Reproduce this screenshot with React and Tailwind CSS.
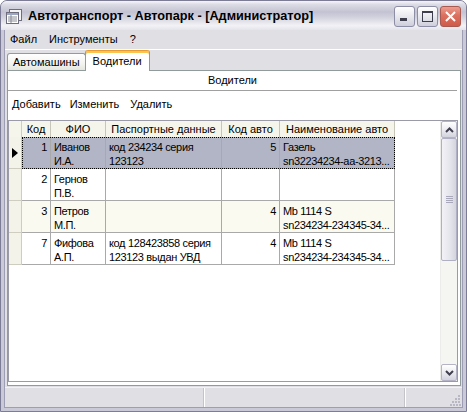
import clsx from 'clsx';

const rows = [
  { id: '1', fio: ['Иванов', 'И.А.'], pass: ['код 234234 серия', '123123'], auto: '5', name: ['Газель', 'sn32234234-aa-3213...'], selected: true },
  { id: '2', fio: ['Гернов', 'П.В.'], pass: [], auto: '', name: [] },
  { id: '3', fio: ['Петров', 'М.П.'], pass: [], auto: '4', name: ['Mb 1114 S', 'sn234234-234345-34...'], alt: true },
  { id: '7', fio: ['Фифова', 'А.П.'], pass: ['код 128423858 серия', '123123 выдан УВД'], auto: '4', name: ['Mb 1114 S', 'sn234234-234345-34...'] },
];

function AppIcon() {
  return (
    <svg width="16" height="15" viewBox="0 0 16 15" className="shrink-0">
      <rect x="3.5" y="0.5" width="12" height="11" fill="#f4f4f4" stroke="#6d6d7d" />
      <rect x="0.5" y="3.5" width="12" height="11" fill="#ffffff" stroke="#6d6d7d" />
      <rect x="1" y="4" width="11" height="2" fill="#9aa6c2" />
      <path d="M2 8h9M2 10h9M2 12h9M5 6v8" stroke="#8a8a98" strokeWidth="1" />
    </svg>
  );
}

function TitleButton({ kind }) {
  const close = kind === 'close';
  return (
    <div
      className={clsx(
        'w-[21px] h-[21px] rounded-[3px] border flex items-center justify-center',
        close
          ? 'border-[#a85a50] bg-[linear-gradient(180deg,#ec9d8f_0%,#dc6f5e_45%,#cf5c4a_100%)]'
          : 'border-[#8d8da6] bg-[linear-gradient(180deg,#ffffff_0%,#eaeaf0_45%,#cfcfdc_100%)]'
      )}
    >
      {kind === 'min' && (
        <svg width="13" height="13" viewBox="0 0 13 13">
          <rect x="2" y="8" width="7" height="3" fill="#3d3d4d" />
        </svg>
      )}
      {kind === 'max' && (
        <svg width="13" height="13" viewBox="0 0 13 13">
          <rect x="1.5" y="1.5" width="10" height="10" fill="none" stroke="#3d3d4d" />
          <rect x="1" y="1" width="11" height="2" fill="#3d3d4d" />
        </svg>
      )}
      {close && (
        <svg width="13" height="13" viewBox="0 0 13 13">
          <path d="M2 2l9 9M11 2l-9 9" stroke="#ffffff" strokeWidth="2" />
        </svg>
      )}
    </div>
  );
}

function Lines({ lines, right }) {
  return (
    <div className={clsx('pt-[3px] leading-[14px] tracking-[-0.35px]', right ? 'text-right pr-[3px]' : 'pl-[3px]')}>
      {lines.map((l, i) => (
        <div key={i} className="whitespace-nowrap">
          {l}
        </div>
      ))}
    </div>
  );
}

function Row({ row }) {
  const bg = row.selected ? 'bg-[#b2b5c5]' : row.alt ? 'bg-[#fbfaf0]' : 'bg-white';
  return (
    <div className="flex h-[32px]">
      <div className="w-[13px] shrink-0 bg-[#f4f3e9] border-r border-b border-[#cfcdc0] flex items-center justify-center">
        {row.selected && (
          <svg width="6" height="10" viewBox="0 0 6 10">
            <path d="M0 0l6 5-6 5z" fill="#000000" />
          </svg>
        )}
      </div>
      <div className={clsx('flex', bg, row.selected && 'outline-1 outline-dotted outline-black -outline-offset-1')}>
        <div className="w-[29px] border-r border-b border-[#a9a9a9] overflow-hidden">
          <Lines lines={[row.id]} right />
        </div>
        <div className="w-[55px] border-r border-b border-[#a9a9a9] overflow-hidden">
          <Lines lines={row.fio} />
        </div>
        <div className="w-[116px] border-r border-b border-[#a9a9a9] overflow-hidden">
          <Lines lines={row.pass} />
        </div>
        <div className="w-[58px] border-r border-b border-[#a9a9a9] overflow-hidden">
          <Lines lines={row.auto ? [row.auto] : []} right />
        </div>
        <div className="w-[115px] border-r border-b border-[#a9a9a9] overflow-hidden">
          <Lines lines={row.name} />
        </div>
      </div>
    </div>
  );
}

function ScrollButton({ down }) {
  return (
    <div className="h-[17px] w-[16px] rounded-[2px] border border-[#b4b4c6] bg-[linear-gradient(180deg,#ffffff_0%,#ececf2_50%,#d3d3de_100%)] flex items-center justify-center">
      <svg width="9" height="6" viewBox="0 0 9 6">
        <path d={down ? 'M1 1l3.5 3.5L8 1' : 'M1 5l3.5-3.5L8 5'} fill="none" stroke="#3f3f4f" strokeWidth="2" />
      </svg>
    </div>
  );
}

export default function App() {
  return (
    <div className="w-[467px] h-[412px] flex flex-col font-['Liberation_Sans',Arial,sans-serif] text-[11px] text-black bg-white">
      <div className="flex-1 flex flex-col rounded-t-[7px] border border-[#7c7c96] bg-[#c9c9d7] overflow-hidden">
        {/* title bar */}
        <div className="h-[29px] shrink-0 flex items-center pt-[2px] pl-[5px] pr-[5px] bg-[linear-gradient(180deg,#f6f6f9_0%,#dcdce6_12%,#c2c2d2_38%,#d4d4df_58%,#f2f2f6_85%,#e3e3eb_100%)]">
          <AppIcon />
          <span className="ml-[6px] font-bold text-[12.7px] text-black">
            Автотранспорт - Автопарк - [Администратор]
          </span>
          <div className="ml-auto flex gap-[2px]">
            <TitleButton kind="min" />
            <TitleButton kind="max" />
            <TitleButton kind="close" />
          </div>
        </div>

        {/* window body */}
        <div className="flex-1 flex flex-col mx-[3px] mb-[3px] bg-[#e0dfe3] border-x border-b border-[#9d9db3]">
          {/* menu */}
          <div className="h-[20px] shrink-0 flex items-center gap-[12px] pl-[5px] border-b border-white">
            <span>Файл</span>
            <span>Инструменты</span>
            <span>?</span>
          </div>

          {/* tabs */}
          <div className="h-[20px] shrink-0 flex items-end pl-[2px]">
            <div className="h-[17px] px-[5px] flex items-center border border-b-0 border-[#919b9c] rounded-t-[3px] bg-[linear-gradient(180deg,#ffffff_0%,#f3f3f0_60%,#e6e6e0_100%)]">
              Автомашины
            </div>
            <div className="relative z-10 h-[21px] -mb-px -ml-px px-[7px] flex items-center border border-b-0 border-[#919b9c] border-t-[#e79a2f] rounded-t-[3px] bg-white shadow-[inset_0_2px_0_#fbc54f]">
              Водители
            </div>
          </div>

          {/* tab page */}
          <div className="flex-1 flex flex-col ml-[2px] mr-[1px] border border-[#919b9c] bg-white">
            <div className="h-[20px] shrink-0 flex items-center justify-center border-b border-[#a0a0a0] mr-[3px]">
              Водители
            </div>
            <div className="h-[29px] shrink-0 flex items-start pt-[6px] pl-[4px] gap-[9px] leading-[14px]">
              <span>Добавить</span>
              <span>Изменить</span>
              <span className="ml-[2px]">Удалить</span>
            </div>

            {/* grid */}
            <div className="flex-1 flex mr-[2px] mb-[3px] border border-[#9a9aa8] bg-white">
              <div className="flex-1 flex flex-col">
                <div className="flex h-[16px]">
                  <div className="w-[13px] bg-[#f6f5ec] border-r border-[#cfcdc0]" />
                  <div className="w-[29px] bg-[#f6f5ec] border-r border-[#c8c6b8] text-center leading-[16px]">Код</div>
                  <div className="w-[55px] bg-[#f6f5ec] border-r border-[#c8c6b8] text-center leading-[16px]">ФИО</div>
                  <div className="w-[116px] bg-[#f6f5ec] border-r border-[#c8c6b8] text-center leading-[16px] whitespace-nowrap">Паспортные данные</div>
                  <div className="w-[58px] bg-[#f6f5ec] border-r border-[#c8c6b8] text-center leading-[16px] whitespace-nowrap">Код авто</div>
                  <div className="w-[115px] bg-[#f6f5ec] border-r border-[#c8c6b8] text-center leading-[16px] whitespace-nowrap">Наименование авто</div>
                </div>
                {rows.map((r) => (
                  <Row key={r.id} row={r} />
                ))}
              </div>

              {/* scrollbar */}
              <div className="w-[17px] flex flex-col bg-[#f5f5f2] border-l border-[#ececea]">
                <ScrollButton />
                <div className="flex-1 flex flex-col">
                  <div className="h-[123px] w-[16px] rounded-[2px] border border-[#b0b0c4] bg-[linear-gradient(90deg,#f2f2f6_0%,#e4e4ec_60%,#d4d4de_100%)] flex items-center justify-center">
                    <div className="flex flex-col gap-[1px]">
                      <div className="w-[7px] h-px bg-[#a8a8ba]" />
                      <div className="w-[7px] h-px bg-[#a8a8ba]" />
                      <div className="w-[7px] h-px bg-[#a8a8ba]" />
                      <div className="w-[7px] h-px bg-[#a8a8ba]" />
                    </div>
                  </div>
                </div>
                <ScrollButton down />
              </div>
            </div>
          </div>

          {/* status bar */}
          <div className="h-[20px] shrink-0 mt-px flex border-t border-[#f2f2f4] bg-[#e0dfe3]">
            <div className="w-[199px] border-r border-[#c4c3c8] shadow-[1px_0_0_#ffffff]" />
            <div className="w-[200px] border-r border-[#c4c3c8] shadow-[1px_0_0_#ffffff] ml-px" />
            <div className="flex-1 flex items-end justify-end pr-[1px] pb-[1px]">
              <svg width="11" height="11" viewBox="0 0 11 11">
                <rect x="8" y="0" width="2" height="2" fill="#b8b8c4" />
                <rect x="5" y="3" width="2" height="2" fill="#b8b8c4" />
                <rect x="8" y="3" width="2" height="2" fill="#b8b8c4" />
                <rect x="2" y="6" width="2" height="2" fill="#b8b8c4" />
                <rect x="5" y="6" width="2" height="2" fill="#b8b8c4" />
                <rect x="8" y="6" width="2" height="2" fill="#b8b8c4" />
                <rect x="0" y="9" width="2" height="2" fill="#b8b8c4" />
                <rect x="3" y="9" width="2" height="2" fill="#b8b8c4" />
                <rect x="6" y="9" width="2" height="2" fill="#b8b8c4" />
                <rect x="9" y="9" width="2" height="2" fill="#b8b8c4" />
              </svg>
            </div>
          </div>
        </div>
      </div>
    </div>
  );
}
